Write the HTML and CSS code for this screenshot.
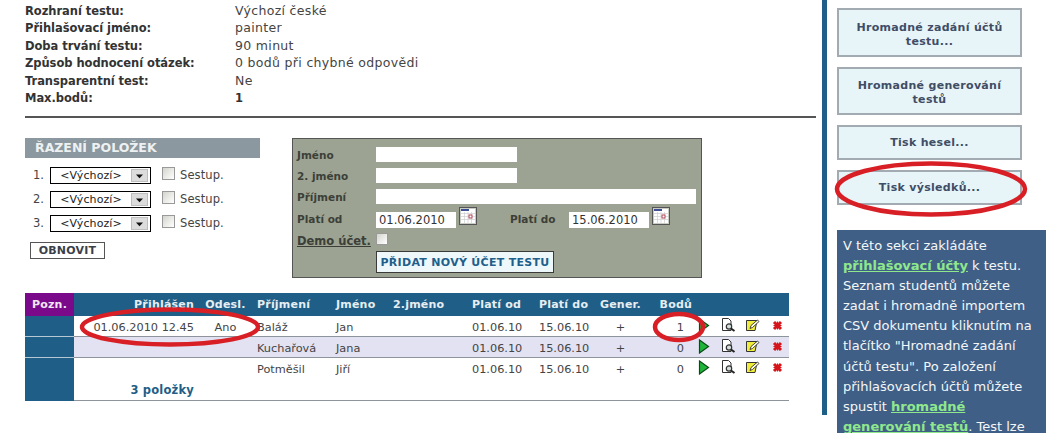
FILE: index.html
```html
<!DOCTYPE html>
<html lang="cs">
<head>
<meta charset="utf-8">
<title>Účty testu</title>
<link rel="stylesheet" href="styles.css">
</head>
<body>
<svg width="0" height="0" class="defs">
  <defs>
    <symbol id="i-play" viewBox="0 0 12 15"><path d="M1.5 1 L10.5 7.5 L1.5 14 Z" fill="#1fb53a" stroke="#0d4a1a" stroke-width="1.2"/></symbol>
    <symbol id="i-view" viewBox="0 0 15 14"><path d="M1.5 .5 H7.5 L10 3 V12.5 H1.5 Z" fill="#fff" stroke="#333" stroke-width="1"/><circle cx="8" cy="8.5" r="2.7" fill="#d5e0dc" stroke="#333" stroke-width="1.2"/><path d="M10 10.5 L13.5 13" stroke="#222" stroke-width="2"/></symbol>
    <symbol id="i-edit" viewBox="0 0 14 13"><path d="M.5 1.5 H11 L9 11.5 H.5 Z" fill="#f2ec3a" stroke="#333" stroke-width="1"/><path d="M4 9.5 L5 6.5 L11.5 1 L13 2.5 L6.5 8.5 Z" fill="#fbfbe0" stroke="#333" stroke-width=".9"/></symbol>
    <symbol id="i-del" viewBox="0 0 11 11"><path d="M2 2 L9 9 M9 2 L2 9" stroke="#d5141c" stroke-width="3"/><path d="M5.5 1.5 V9.5 M1.5 5.5 H9.5" stroke="#d5141c" stroke-width="1.2"/></symbol>
    <symbol id="i-cal" viewBox="0 0 18 18"><rect x=".5" y=".5" width="17" height="17" fill="#c9ccc4" stroke="#555"/><rect x="2" y="2" width="14" height="14" fill="#fff"/><rect x="2" y="2" width="8" height="2" fill="#3c4f93"/><path d="M2 6.5H16M2 9.5H16M2 12.5H16M5.5 5V16M9 5V16M12.5 5V16" stroke="#cfcfcf" stroke-width=".7"/><rect x="10" y="8" width="3" height="3" fill="#fff" stroke="#b0475a"/></symbol>
    <symbol id="i-arrow" viewBox="0 0 17 14" preserveAspectRatio="none"><rect width="17" height="14" fill="#bdbdbd"/><rect x="1" y="1" width="15" height="12" fill="#dcdcdc"/><path d="M5 6 H12 L8.5 10 Z" fill="#111"/></symbol>
  </defs>
</svg>

<div class="page">
  <main class="main">
    <dl class="info">
      <dt>Rozhraní testu:</dt><dd>Výchozí české</dd>
      <dt>Přihlašovací jméno:</dt><dd>painter</dd>
      <dt>Doba trvání testu:</dt><dd>90 minut</dd>
      <dt>Způsob hodnocení otázek:</dt><dd>0 bodů při chybné odpovědi</dd>
      <dt>Transparentní test:</dt><dd>Ne</dd>
      <dt>Max.bodů:</dt><dd class="strong">1</dd>
    </dl>
    <hr class="rule">

    <div class="panels">
      <section class="sort">
        <h2 class="sort-title">ŘAZENÍ POLOŽEK</h2>
        <div class="sort-row"><span class="num">1.</span><span class="select"><span class="select-text">&lt;Výchozí&gt;</span><svg class="arrow"><use href="#i-arrow"/></svg></span><span class="check"></span><span class="sort-label">Sestup.</span></div>
        <div class="sort-row"><span class="num">2.</span><span class="select"><span class="select-text">&lt;Výchozí&gt;</span><svg class="arrow"><use href="#i-arrow"/></svg></span><span class="check"></span><span class="sort-label">Sestup.</span></div>
        <div class="sort-row"><span class="num">3.</span><span class="select"><span class="select-text">&lt;Výchozí&gt;</span><svg class="arrow"><use href="#i-arrow"/></svg></span><span class="check"></span><span class="sort-label">Sestup.</span></div>
        <button class="refresh" type="button">OBNOVIT</button>
      </section>

      <form class="add">
        <div class="add-row r1"><label>Jméno</label><input class="field short" type="text"></div>
        <div class="add-row r2"><label>2. jméno</label><input class="field short" type="text"></div>
        <div class="add-row r3"><label>Příjmení</label><input class="field long" type="text"></div>
        <div class="add-row r4"><label>Platí od</label><input class="field date" type="text" value="01.06.2010"><svg class="cal"><use href="#i-cal"/></svg><label class="to">Platí do</label><input class="field date" type="text" value="15.06.2010"><svg class="cal"><use href="#i-cal"/></svg></div>
        <div class="add-row r5"><label class="demo">Demo účet.</label><span class="check small"></span></div>
        <div class="add-row r6"><button class="add-btn" type="button">PŘIDAT NOVÝ ÚČET TESTU</button></div>
      </form>
    </div>

    <table class="grid">
      <colgroup>
        <col class="c1"><col class="c2"><col class="c3"><col class="c4"><col class="c5"><col class="c6"><col class="c7"><col class="c8"><col class="c9"><col class="c10"><col class="c11"><col class="c12"><col class="c13"><col class="c14">
      </colgroup>
      <thead>
        <tr><th class="pozn">Pozn.</th><th class="right">Přihlášen</th><th class="center">Odesl.</th><th>Příjmení</th><th>Jméno</th><th>2.jméno</th><th>Platí od</th><th>Platí do</th><th class="center">Gener.</th><th class="right">Bodů</th><th></th><th></th><th></th><th></th></tr>
      </thead>
      <tbody>
        <tr><td class="side"></td><td class="right">01.06.2010 12.45</td><td class="center">Ano</td><td>Baláž</td><td>Jan</td><td></td><td>01.06.10</td><td>15.06.10</td><td class="center">+</td><td class="pts">1</td><td class="ic"><svg class="play"><use href="#i-play"/></svg></td><td class="ic"><svg class="view"><use href="#i-view"/></svg></td><td class="ic"><svg class="edit"><use href="#i-edit"/></svg></td><td class="ic"><svg class="del"><use href="#i-del"/></svg></td></tr>
        <tr class="alt"><td class="side"></td><td></td><td></td><td>Kuchařová</td><td>Jana</td><td></td><td>01.06.10</td><td>15.06.10</td><td class="center">+</td><td class="pts">0</td><td class="ic"><svg class="play"><use href="#i-play"/></svg></td><td class="ic"><svg class="view"><use href="#i-view"/></svg></td><td class="ic"><svg class="edit"><use href="#i-edit"/></svg></td><td class="ic"><svg class="del"><use href="#i-del"/></svg></td></tr>
        <tr><td class="side"></td><td></td><td></td><td>Potměšil</td><td>Jiří</td><td></td><td>01.06.10</td><td>15.06.10</td><td class="center">+</td><td class="pts">0</td><td class="ic"><svg class="play"><use href="#i-play"/></svg></td><td class="ic"><svg class="view"><use href="#i-view"/></svg></td><td class="ic"><svg class="edit"><use href="#i-edit"/></svg></td><td class="ic"><svg class="del"><use href="#i-del"/></svg></td></tr>
      </tbody>
      <tfoot>
        <tr><td class="side"></td><td class="count right">3 položky</td><td colspan="12"></td></tr>
      </tfoot>
    </table>
  </main>

  <div class="bar"></div>

  <aside class="aside">
    <button class="side-btn b-tall" type="button">Hromadné zadání účtů<br>testu...</button>
    <button class="side-btn b-mid" type="button">Hromadné generování<br>testů</button>
    <button class="side-btn" type="button">Tisk hesel...</button>
    <button class="side-btn" type="button">Tisk výsledků...</button>
    <div class="help">V této sekci zakládáte <a href="#">přihlašovací účty</a> k testu. Seznam studentů můžete zadat i hromadně importem CSV dokumentu kliknutím na tlačítko "Hromadné zadání účtů testu". Po založení přihlašovacích účtů můžete spustit <a href="#">hromadné generování testů</a>. Test lze</div>
  </aside>
</div>

<svg class="marks" viewBox="0 0 1054 433" aria-hidden="true">
  <ellipse cx="170" cy="327" rx="88" ry="17.5"/>
  <ellipse cx="679" cy="327" rx="24" ry="13"/>
  <ellipse cx="931" cy="189" rx="94" ry="25.5"/>
</svg>
</body>
</html>
```
FILE: styles.css
```css
html, body { margin: 0; padding: 0; height: 433px; overflow: hidden; background: #fff; }
body { font-family: "DejaVu Sans", Verdana, sans-serif; font-size: 12px; color: #3a3a3a; position: relative; }
.defs { position: absolute; }
.page { display: flex; align-items: flex-start; height: 433px; overflow: hidden; }

.main { width: 791px; margin-left: 25px; flex: none; }
.info { display: grid; grid-template-columns: 210px 1fr; grid-auto-rows: 17.5px; margin: 2.5px 0 0; line-height: 17.5px; }
.info dt { font-weight: bold; font-size: 11.5px; letter-spacing: -.05px; color: #333; }
.info dd { margin: 0; font-size: 12.5px; line-height: 16px; color: #444; letter-spacing: .32px; }
.info dd.strong { font-weight: bold; font-size: 11.5px; line-height: 17.5px; color: #333; }
.rule { border: 0; height: 1.5px; background: #555; margin: 8.5px 0 0; }

.panels { display: flex; margin-top: 20.5px; height: 155px; }
.sort { width: 235px; margin-right: 32px; flex: none; }
.sort-title { margin: 0 0 5px; height: 20px; line-height: 20px; padding-left: 10px; font-size: 12.5px; font-weight: bold; background: #8b989f; color: #eef1f1; }
.sort-row { display: flex; align-items: center; height: 24px; padding-left: 8px; font-size: 11.5px; color: #444; }
.num { width: 17px; }
.select { display: flex; align-items: center; width: 97px; height: 15px; border: 1px solid #000; padding-right: 2px; justify-content: space-between; margin-right: 11px; background: #fff; }
.select-text { flex: 1; text-align: center; font-size: 11px; letter-spacing: .1px; color: #222; }
.arrow { width: 17px; height: 13px; }
.check { display: block; width: 11px; height: 11px; margin-top: -3px; border: 1px solid #999; background: linear-gradient(135deg, #d4d4ce, #fff); margin-right: 5px; flex: none; }
.sort-label { letter-spacing: .1px; }
.refresh { display: block; margin: 7px 0 0 5px; width: 75px; height: 17px; padding: 0; border: 1px solid #555; background: #fff; font: bold 11px "DejaVu Sans", sans-serif; color: #3a3f4a; letter-spacing: .2px; }

.add { width: 410px; height: 140px; box-sizing: border-box; border: 1px solid #555; background: #9ca392; padding-left: 4px; }
.add-row { display: flex; align-items: center; height: 21px; }
.add-row label { width: 79px; flex: none; font-weight: bold; font-size: 10.5px; color: #3c3f38; }
.r1 { margin-top: 5px; }
.r4 { height: 23px; }
.add-row label.to { width: 59px; margin-left: 33px; }
.add-row label.demo { font-size: 11.5px; text-decoration: underline; }
.field { box-sizing: border-box; height: 15px; border: 0; padding: 0 3px; background: #fff; font: 11.5px "DejaVu Sans", sans-serif; color: #333; margin: 0; border-radius: 0; }
.short { width: 141px; }
.long { width: 320px; }
.date { width: 80px; height: 16px; margin-top: 3px; }
.cal { width: 18px; height: 18px; margin: -5px 0 0 3px; flex: none; }
.check.small { width: 10px; height: 10px; margin: -5px 0 0 0; }
.r5 { height: 22px; }
.r6 { padding-left: 79px; height: 24px; margin-top: -2px; }
.add-btn { width: 178px; height: 22px; padding: 0; border: 1px solid #3a3a3a; background: #eef7fa; font: bold 11px "DejaVu Sans", sans-serif; color: #1f5f8b; letter-spacing: .3px; }

.grid { border-collapse: collapse; table-layout: fixed; width: 764px; font-size: 11.3px; color: #444; }
.c1 { width: 49px; } .c2 { width: 120px; } .c3 { width: 63px; } .c4 { width: 79px; } .c5 { width: 57px; } .c6 { width: 79px; }
.c7 { width: 67px; } .c8 { width: 58px; } .c9 { width: 47px; } .c10 { width: 48px; } .c11 { width: 24px; } .c12 { width: 25px; } .c13 { width: 24px; } .c14 { width: 24px; }
.grid th { height: 23px; padding: 0; background: #1f5f87; color: #e6eef2; font-size: 11px; font-weight: bold; text-align: left; letter-spacing: .2px; }
.grid th.pozn { background: #7a0a8a; text-align: center; color: #f0e8f2; }
.grid th.right, .grid td.right { text-align: right; }
.grid th.center, .grid td.center { text-align: center; }
.grid td { height: 18px; padding: 2px 0 0; border-bottom: 1px solid #8d949c; }
.grid td.side { background: #1f5f87; border-bottom-color: #b5c8d4; }
.grid tr.alt td { background: #e2e2f2; }
.grid tr.alt td.side { background: #1f5f87; }
.grid tbody tr:last-child td { border-bottom: 0; }
.grid tfoot td { height: 20px; border-bottom: 1px solid #8d949c; }
.grid tfoot td.side { border-bottom-color: #1f5f87; }
.grid td.count { font-size: 11.5px; font-weight: bold; color: #1f5f87; letter-spacing: .2px; }
.grid td.pts { text-align: right; padding-right: 8px; }
.ic { text-align: center; vertical-align: middle; line-height: 0; }
.ic svg { display: inline-block; margin-top: -4px; }
.play { width: 12px; height: 15px; }
.view { width: 15px; height: 14px; }
.edit { width: 14px; height: 13px; }
.del { width: 11px; height: 11px; }

.bar { width: 5px; height: 415px; background: #1f5f87; margin-left: 6px; flex: none; }
.aside { width: 209px; margin-left: 10px; padding-top: 8px; flex: none; display: flex; flex-direction: column; align-items: flex-start; }
.side-btn { width: 185px; height: 35px; margin: 0 0 10px; padding: 1px 0 0; border: 2px solid #a3abb2; background: #e8f5f8; font: bold 11px/14px "DejaVu Sans", sans-serif; color: #3f4d66; letter-spacing: .3px; }
.b-tall { height: 49px; padding-top: 4px; }
.b-mid { height: 48px; padding-top: 4px; }
.help { width: 209px; box-sizing: border-box; margin-top: 15px; padding: 6px; background: #3f5f87; color: #f4f7f7; font-size: 13px; line-height: 20.1px; }
.help a { color: #90e88c; font-weight: bold; }

.marks { position: absolute; left: 0; top: 0; width: 1054px; height: 433px; pointer-events: none; }
.marks ellipse { fill: none; stroke: #d81f26; stroke-width: 4.5; }
```
